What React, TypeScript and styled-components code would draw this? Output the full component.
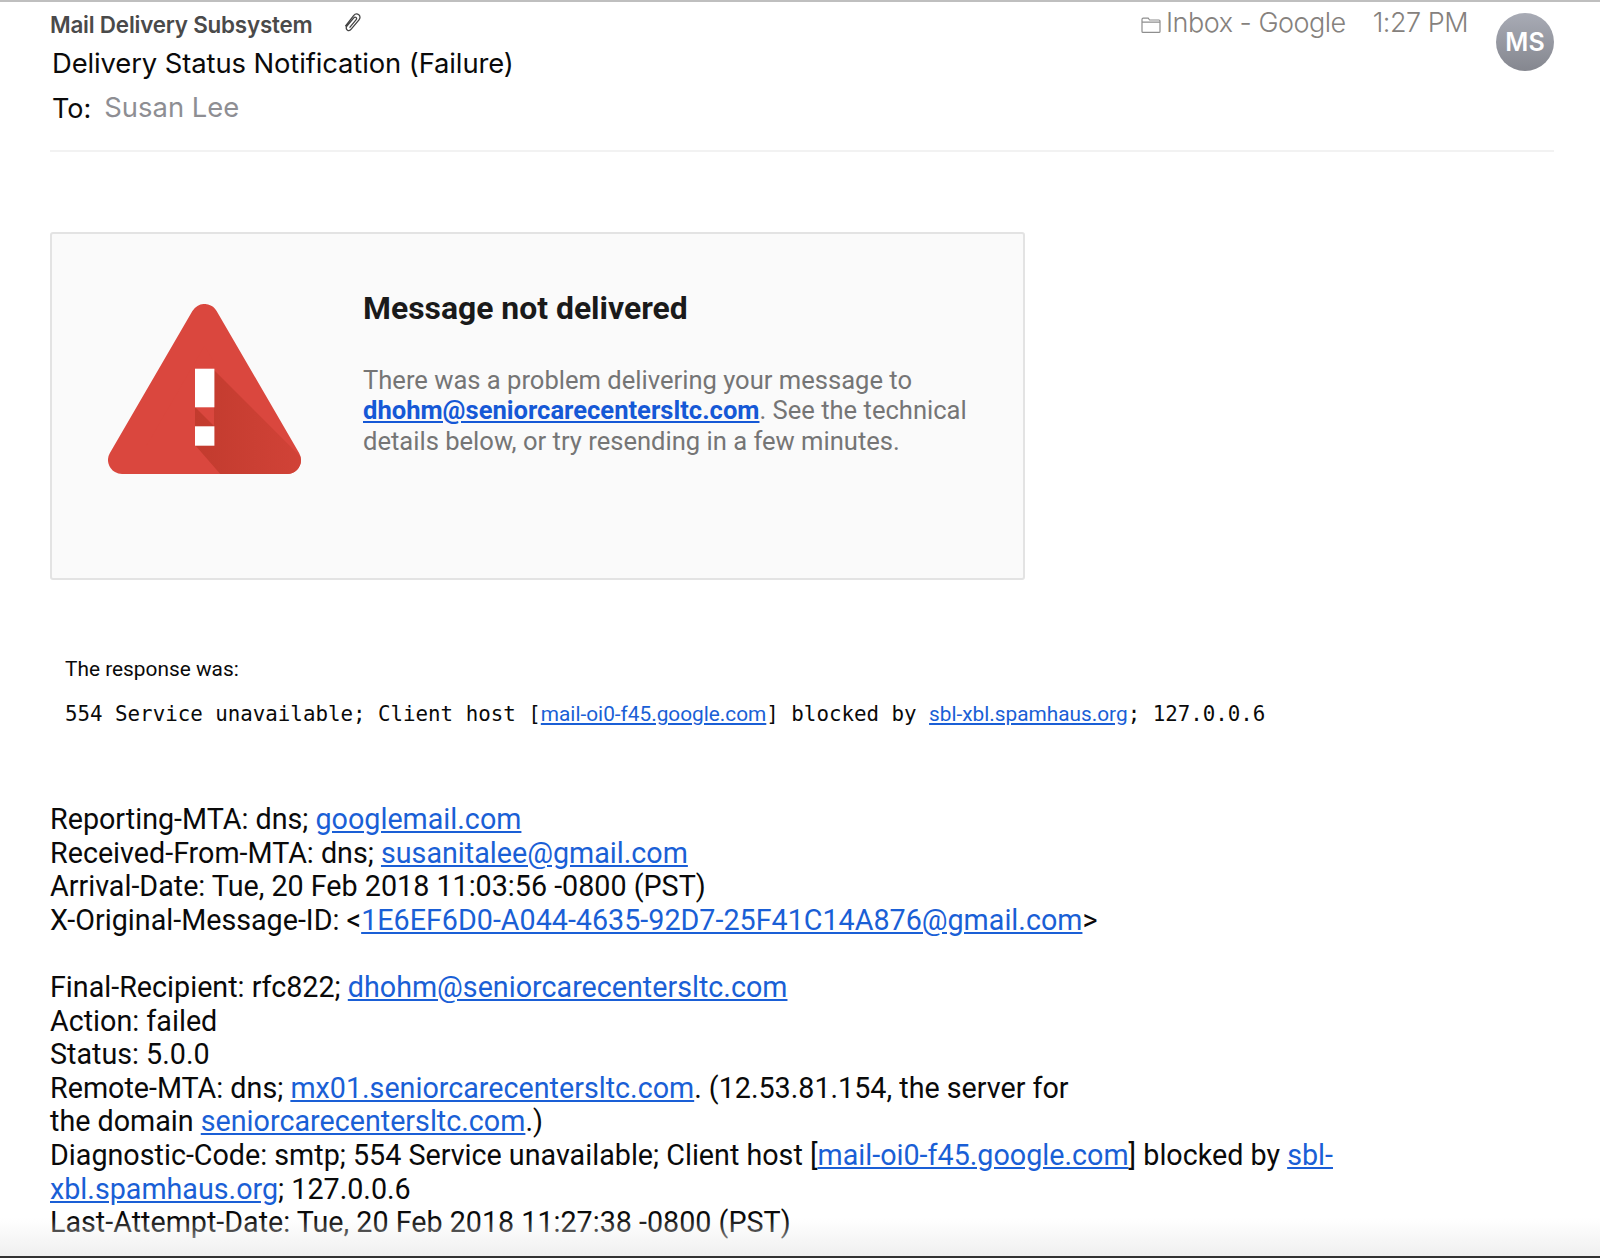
import React from "react";
import styled, { createGlobalStyle } from "styled-components";

const Global = createGlobalStyle`
  html, body { margin: 0; padding: 0; background: #fff; }
  body { font-family: Roboto, "Liberation Sans", sans-serif; color: #000; }
`;

const Page = styled.div`
  position: relative;
  width: 1600px;
  height: 1258px;
  overflow: hidden;
  box-sizing: border-box;
  border-top: 2px solid #bfbfbf;
  padding: 0 46px 0 50px;
`;

const Header = styled.header`
  display: flex;
  justify-content: space-between;
  align-items: flex-start;
  height: 148px;
  border-bottom: 2px solid #f2f2f2;
  box-sizing: content-box;
`;

const HeaderLeft = styled.div`
  display: flex;
  flex-direction: column;
  font-family: Inter, "Liberation Sans", sans-serif;
`;

const SenderRow = styled.div`
  display: flex;
  align-items: center;
  height: 24px;
  margin-top: 10px;
  gap: 29px;
`;

const Sender = styled.span`
  font-size: 22.4px;
  font-weight: 600;
  color: #4a4a4a;
  letter-spacing: -0.2px;
`;

const ClipIcon = styled.svg`
  margin-top: -4px;
`;

const Subject = styled.div`
  font-size: 27.4px;
  line-height: 36px;
  margin-top: 9px;
  color: #0a0a0a;
  letter-spacing: -0.1px;
  margin-left: 2px;
`;

const ToRow = styled.div`
  display: flex;
  align-items: flex-start;
  gap: 13px;
  margin-top: 8px;
  margin-left: 2px;
`;

const ToLabel = styled.span`
  font-size: 27px;
  line-height: 36px;
  margin-top: 2px;
  color: #0a0a0a;
`;

const ToName = styled.span`
  font-size: 27.4px;
  line-height: 36px;
  color: #8e8e93;
`;

const HeaderRight = styled.div`
  display: flex;
  align-items: flex-start;
`;

const Meta = styled.div`
  display: flex;
  align-items: center;
  height: 40px;
  font-family: Inter, "Liberation Sans", sans-serif;
  font-weight: 300;
  font-size: 27px;
  letter-spacing: -0.5px;
  color: #85817d;
`;

const FolderIcon = styled.svg`
  margin-top: 5px;
`;

const Mailbox = styled.span`
  margin-left: 5px;
`;

const Time = styled.span`
  margin-left: 27px;
`;

const Avatar = styled.div`
  width: 58px;
  height: 58px;
  margin: 11px 0 0 28px;
  border-radius: 50%;
  background: linear-gradient(#a8abb5, #85878f);
  color: #fff;
  display: flex;
  align-items: center;
  justify-content: center;
  font-family: Inter, "Liberation Sans", sans-serif;
  font-weight: 600;
  font-size: 25px;
`;

const Card = styled.section`
  box-sizing: border-box;
  width: 975px;
  height: 348px;
  margin-top: 80px;
  background: #fafafa;
  border: 2px solid #e3e3e3;
  border-radius: 3px;
  padding: 70px 0 0 56px;
  display: flex;
`;

const Warning = styled.svg`
  flex: none;
  width: 193px;
  height: 170px;
`;

const CardBody = styled.div`
  margin-left: 62px;
  margin-top: -18px;
  width: 610px;
`;

const CardTitle = styled.h2`
  margin: 0;
  font-size: 31.9px;
  line-height: 44px;
  font-weight: 700;
  color: #1a1a1a;
`;

const CardText = styled.p`
  margin: 34.6px 0 0;
  font-size: 25.57px;
  line-height: 30.6px;
  color: #757575;
`;

const BoldLink = styled.a`
  font-weight: 700;
  color: #1558d6;
  text-decoration: underline;
`;

const Response = styled.div`
  margin: 75px 0 0 15px;
`;

const ResponseLabel = styled.div`
  font-size: 20.85px;
  line-height: 28px;
  color: #0a0a0a;
`;

const ResponseCode = styled.div`
  margin-top: 17px;
  font-family: "DejaVu Sans Mono", "Liberation Mono", monospace;
  font-size: 20.8px;
  line-height: 28px;
  color: #0a0a0a;
  white-space: nowrap;
`;

const CodeLink = styled.a`
  font-family: Roboto, sans-serif;
  color: #1a5fd6;
  text-decoration: underline;
`;

const Report = styled.div`
  margin-top: 75px;
  font-size: 28.7px;
  line-height: 33.6px;
  color: #0a0a0a;
  width: 1320px;
`;

const ReportBlock = styled.div`
  margin-bottom: 33.6px;
`;

const Line = styled.div`
  white-space: nowrap;
`;

const ReportLink = styled.a`
  color: #1a5fd6;
  text-decoration: underline;
`;

const BottomFade = styled.div`
  position: absolute;
  left: 0;
  right: 0;
  bottom: 0;
  height: 40px;
  background: linear-gradient(rgba(240, 240, 240, 0), rgba(238, 238, 238, 0.9));
  border-bottom: 2px solid #333;
  box-sizing: border-box;
  pointer-events: none;
`;

const Clip = () => (
  <ClipIcon width="20" height="20" viewBox="0 0 20 20" fill="none" stroke="#444" strokeWidth="1.3" strokeLinecap="round">
    <path d="M3.6 13.8 L11.6 3.6 C13 1.9 15.3 1.6 16.8 2.8 C18.3 4 18.4 6.2 17 7.9 L9.2 17.2 C8.2 18.5 6.4 18.8 5.2 17.9 C4 17 3.9 15.3 4.9 14.1 L11.8 5.8 C12.4 5.1 13.4 5 14.1 5.5 C14.8 6 14.8 7 14.2 7.7 L8 15.2" />
  </ClipIcon>
);

const Folder = () => (
  <FolderIcon width="20" height="16" viewBox="0 0 20 16" fill="none" stroke="#8e8e8e" strokeWidth="1.2">
    <path d="M1 14.4 V2.6 C1 1.8 1.5 1.2 2.3 1.2 H7.2 L8.6 3 H18 C18.6 3 19 3.4 19 4 V14.4 C19 14.9 18.6 15.3 18 15.3 H2 C1.4 15.3 1 14.9 1 14.4 Z M1 5.2 H19" />
  </FolderIcon>
);

const triangle = "96.5,14 14,156 179,156";

const WarningIcon = () => (
  <Warning viewBox="0 0 193 170">
    <defs>
      <mask id="tri">
        <polygon points={triangle} fill="#fff" stroke="#fff" strokeWidth="28" strokeLinejoin="round" />
      </mask>
      <linearGradient id="shade" x1="0" x2="1" y1="0" y2="0">
        <stop offset="0" stopColor="#c23b2e" />
        <stop offset="1" stopColor="#d24338" />
      </linearGradient>
    </defs>
    <polygon points={triangle} fill="#da473e" stroke="#da473e" strokeWidth="28" strokeLinejoin="round" />
    <g mask="url(#tri)">
      <polygon points="106,66 200,160 200,172 114,172 87,141 87,103 106,122" fill="url(#shade)" />
    </g>
    <rect x="87" y="64.7" width="19.4" height="38.6" fill="#fff" />
    <rect x="87" y="122.3" width="19.4" height="19.4" fill="#fff" />
  </Warning>
);

export default function App() {
  return (
    <>
      <Global />
      <Page>
        <Header>
          <HeaderLeft>
            <SenderRow>
              <Sender>Mail Delivery Subsystem</Sender>
              <Clip />
            </SenderRow>
            <Subject>Delivery Status Notification (Failure)</Subject>
            <ToRow>
              <ToLabel>To:</ToLabel>
              <ToName>Susan Lee</ToName>
            </ToRow>
          </HeaderLeft>
          <HeaderRight>
            <Meta>
              <Folder />
              <Mailbox>Inbox - Google</Mailbox>
              <Time>1:27 PM</Time>
            </Meta>
            <Avatar>MS</Avatar>
          </HeaderRight>
        </Header>

        <Card>
          <WarningIcon />
          <CardBody>
            <CardTitle>Message not delivered</CardTitle>
            <CardText>
              There was a problem delivering your message to{" "}
              <BoldLink href="#">dhohm@seniorcarecentersltc.com</BoldLink>. See the technical details below, or try resending in a few minutes.
            </CardText>
          </CardBody>
        </Card>

        <Response>
          <ResponseLabel>The response was:</ResponseLabel>
          <ResponseCode>
            554 Service unavailable; Client host [<CodeLink href="#">mail-oi0-f45.google.com</CodeLink>] blocked by{" "}
            <CodeLink href="#">sbl-xbl.spamhaus.org</CodeLink>; 127.0.0.6
          </ResponseCode>
        </Response>

        <Report>
          <ReportBlock>
            <Line>Reporting-MTA: dns; <ReportLink href="#">googlemail.com</ReportLink></Line>
            <Line>Received-From-MTA: dns; <ReportLink href="#">susanitalee@gmail.com</ReportLink></Line>
            <Line>Arrival-Date: Tue, 20 Feb 2018 11:03:56 -0800 (PST)</Line>
            <Line>X-Original-Message-ID: &lt;<ReportLink href="#">1E6EF6D0-A044-4635-92D7-25F41C14A876@gmail.com</ReportLink>&gt;</Line>
          </ReportBlock>
          <div>
            <Line>Final-Recipient: rfc822; <ReportLink href="#">dhohm@seniorcarecentersltc.com</ReportLink></Line>
            <Line>Action: failed</Line>
            <Line>Status: 5.0.0</Line>
            <Line>Remote-MTA: dns; <ReportLink href="#">mx01.seniorcarecentersltc.com</ReportLink>. (12.53.81.154, the server for</Line>
            <Line>the domain <ReportLink href="#">seniorcarecentersltc.com</ReportLink>.)</Line>
            <Line>Diagnostic-Code: smtp; 554 Service unavailable; Client host [<ReportLink href="#">mail-oi0-f45.google.com</ReportLink>] blocked by <ReportLink href="#">sbl-</ReportLink></Line>
            <Line><ReportLink href="#">xbl.spamhaus.org</ReportLink>; 127.0.0.6</Line>
            <Line>Last-Attempt-Date: Tue, 20 Feb 2018 11:27:38 -0800 (PST)</Line>
          </div>
        </Report>
        <BottomFade />
      </Page>
    </>
  );
}
